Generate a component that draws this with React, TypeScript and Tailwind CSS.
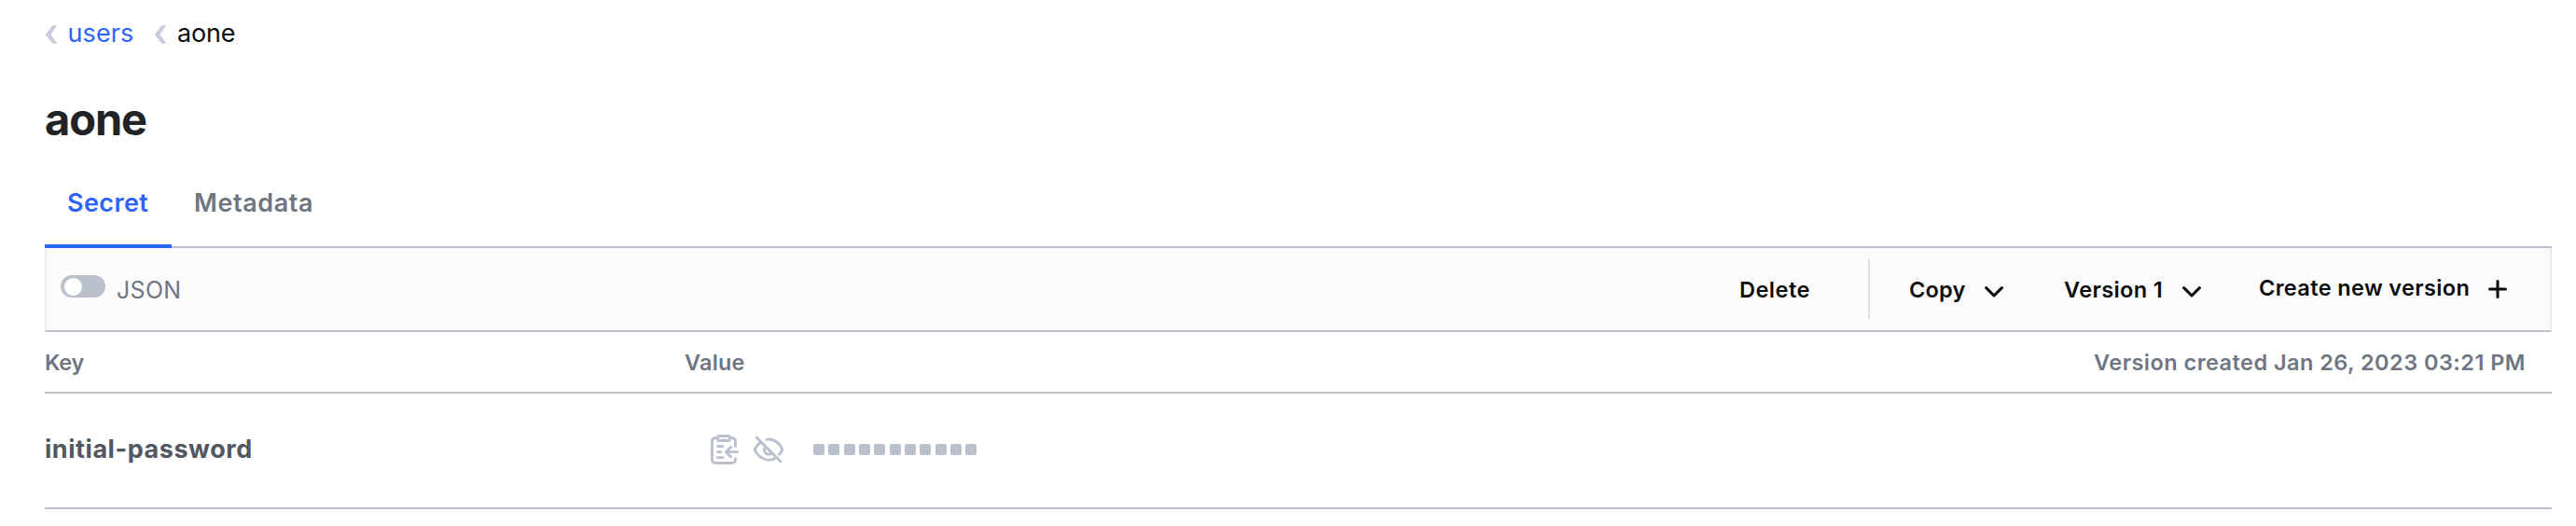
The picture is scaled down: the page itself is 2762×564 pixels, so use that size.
import React from "react";

function Crumb() {
  return (
    <svg className="h-5 w-3 shrink-0" viewBox="0 0 12 20" fill="#c8cce0">
      <path d="M7.4 0.2H12.4L5.4 10l7 9.8H7.4L0.2 10.8V9.2z" />
    </svg>
  );
}

function Chevron() {
  return (
    <svg className="mt-1.5 h-3 w-5 shrink-0" viewBox="0 0 20 12" fill="none" stroke="#0c0c0e" strokeWidth="3" strokeLinecap="round" strokeLinejoin="round">
      <path d="M1.6 1.6 10 10l8.4-8.4" />
    </svg>
  );
}

function Plus() {
  return (
    <svg className="h-5 w-5 shrink-0" viewBox="0 0 20 20" fill="none" stroke="#0c0c0e" strokeWidth="3" strokeLinecap="round">
      <path d="M10 1.5v17M1.5 10h17" />
    </svg>
  );
}

function ClipboardCopy() {
  return (
    <svg className="h-8 w-8 shrink-0" viewBox="0 0 16 16" fill="none" stroke="#bac1cc" strokeWidth="1.45" strokeLinecap="round" strokeLinejoin="round">
      <rect x="4.8" y="0.75" width="6.4" height="2.5" rx="0.8" />
      <path d="M4.6 1.75H3.5A1.75 1.75 0 0 0 1.75 3.5v10a1.75 1.75 0 0 0 1.75 1.75h9a1.75 1.75 0 0 0 1.75-1.75V12.9M11.4 1.75h1.1a1.75 1.75 0 0 1 1.75 1.75V6.2M4.75 6.3h2.8M4.75 9.3h1.7M4.75 12.3h2.8M15.3 9.3H9.5M11.7 6.7 9.3 9.3l2.4 2.6" />
    </svg>
  );
}

function EyeOff() {
  return (
    <svg className="h-8 w-8 shrink-0" viewBox="0 0 16 16" fill="none" stroke="#bac1cc" strokeWidth="1.45" strokeLinecap="round" strokeLinejoin="round">
      <path d="M1.7 1.7 14.4 14.4M7 2.6C11.3 2.1 13.9 4.9 15.2 7.5q.25.5 0 1C14.8 9.3 14.3 10 13.7 10.6M3.6 4.3C2.3 5.2 1.4 6.4.8 7.5q-.25.5 0 1c2.3 4.6 7.3 6.4 11.2 4M6 7c-1 2.4 1.2 4.3 3.6 3.2" />
    </svg>
  );
}

const dots = Array.from({ length: 11 }, (_, i) => i);

export default function App() {
  return (
    <div className="h-[564px] w-[2762px] overflow-hidden bg-white pl-12 pr-[26px] font-['Inter',sans-serif] whitespace-nowrap text-[#0c0c0e]">
      <nav className="flex h-[70px] items-center pl-px pt-0.5 text-[27px] leading-[68px]">
        <div className="flex w-[117px] items-center">
          <span className="mt-0.5"><Crumb /></span>
          <a className="ml-[11.5px] tracking-[0.1px] text-[#2e63f8]">users</a>
        </div>
        <span className="mt-0.5"><Crumb /></span>
        <span className="ml-3 tracking-[-0.2px]">aone</span>
      </nav>

      <h1 className="h-[116px] text-[47px] font-bold leading-[116px] tracking-[-1.1px] text-[#222326]">aone</h1>

      <div className="flex h-20 border-b-2 border-[#bac1cc] text-[27px] font-semibold leading-[64px]">
        <div className="h-20 w-[136px] border-b-4 border-[#2e63f8] pl-6 tracking-[0.4px] text-[#2e63f8]">Secret</div>
        <div className="pl-6 tracking-[0.55px] text-[#6f7682]">Metadata</div>
      </div>

      <div className="flex h-[90px] items-center border-x-2 border-b-2 border-x-[#ebecf2] border-b-[#bac1cc] bg-[#fbfbfb] text-[23.5px] font-semibold">
        <div className="mb-[6px] ml-[15px] flex h-6 w-12 items-center rounded-full bg-[#bac1cc] pl-1">
          <div className="h-[19px] w-[19px] rounded-full bg-white" />
        </div>
        <span className="ml-3 mt-1 text-[25px] font-normal tracking-[0.3px] text-[#6f7682]">JSON</span>
        <div className="ml-auto flex h-[88px] items-center">
          <div className="mt-0.5 w-[138px] tracking-[0.5px]">Delete</div>
          <div className="h-16 w-0.5 bg-[#dedfe3]" />
          <div className="ml-[42px] flex w-[166px] items-center">
            <span className="mt-0.5 w-[81px] tracking-[0.22px]">Copy</span>
            <Chevron />
          </div>
          <div className="flex w-[209px] items-center">
            <span className="mt-0.5 w-[127px] tracking-[0.4px]">Version 1</span>
            <Chevron />
          </div>
          <div className="flex w-[312px] items-center">
            <span className="mb-0.5 w-[246px] tracking-[0.37px]">Create new version</span>
            <Plus />
          </div>
        </div>
      </div>

      <div className="flex h-[66px] border-b-2 border-[#bac1cc] text-[23.5px] font-semibold leading-[65px] text-[#6f7682]">
        <span className="w-[686px] tracking-[-0.28px]">Key</span>
        <span className="tracking-[0.2px]">Value</span>
        <span className="ml-auto pr-[28px] tracking-[0.47px]">Version created Jan 26, 2023 03:21 PM</span>
      </div>

      <div className="flex h-[124px] items-center border-b-2 border-[#bac1cc] pb-0.5">
        <span className="w-[712px] text-[27px] font-bold tracking-[0.55px] text-[#525761]">initial-password</span>
        <ClipboardCopy />
        <span className="ml-4"><EyeOff /></span>
        <div className="ml-8 flex gap-[4.35px]">
          {dots.map((i) => (
            <span key={i} className="h-3 w-3 rounded-[2px] bg-[#bac1cc]" />
          ))}
        </div>
      </div>
    </div>
  );
}
